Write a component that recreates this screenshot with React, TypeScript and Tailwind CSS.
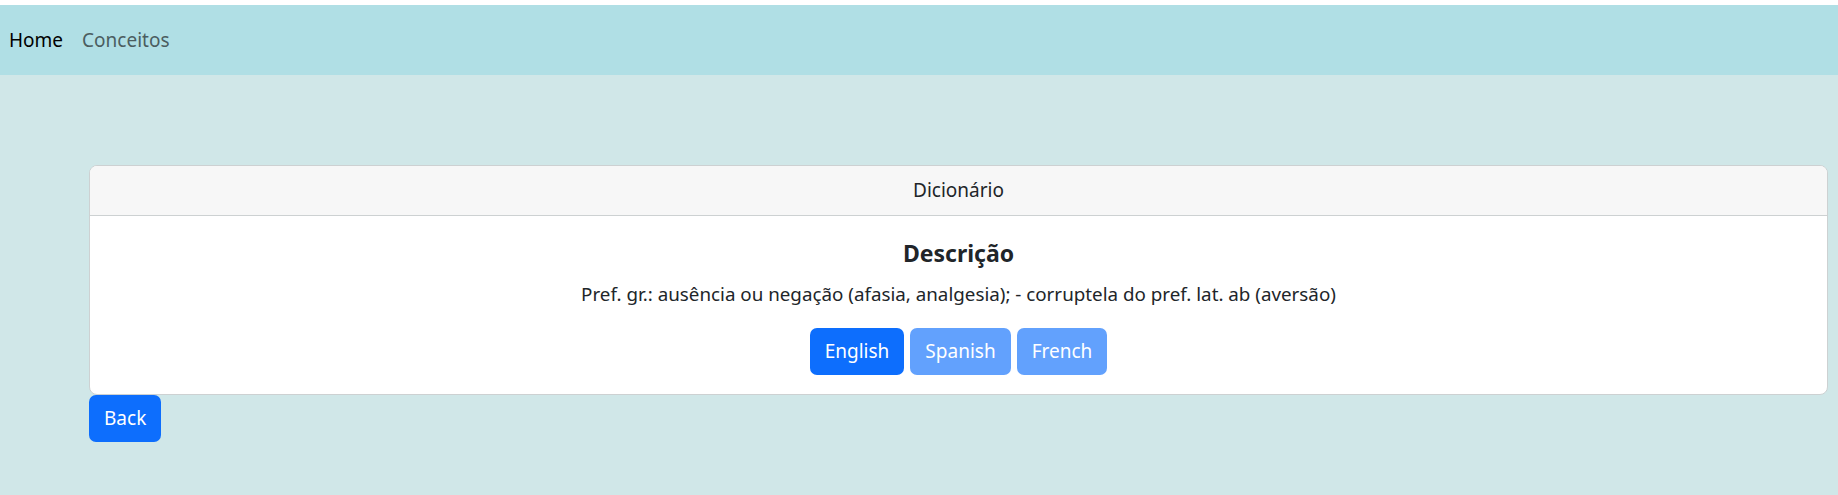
export default function App() {
  return (
    <div className="min-h-[495px] bg-[#d0e7e8] pt-[5px] font-['Noto_Sans',sans-serif] text-[19px] text-[#212529]" style={{ backgroundImage: "linear-gradient(#fff 5px, transparent 5px)" }}>
      <nav className="flex h-[70px] items-center gap-[19px] bg-[#b0dfe5] px-[9px]">
        <a className="text-black">Home</a>
        <a className="text-[#4b5d60]">Conceitos</a>
      </nav>

      <main className="pl-[89px] pr-[10px] pt-[90px]">
        <div className="overflow-hidden rounded-[8px] border border-[#cdd1d2] bg-white">
          <div className="flex h-[50px] items-center justify-center border-b border-[#cdd1d2] bg-[#f7f7f7]">
            Dicionário
          </div>
          <div className="flex flex-col items-center pt-[21px] pb-[19px]">
            <h5 className="text-[23px] font-bold leading-[32px]">Descrição</h5>
            <p className="mt-[10px] text-[18.8px] leading-[30px]">
              Pref. gr.: ausência ou negação (afasia, analgesia); - corruptela do pref. lat. ab (aversão)
            </p>
            <div className="mt-[19px] flex gap-[6px]">
              <button className="h-[47px] rounded-[7px] bg-[#0d6efd] px-[15px] text-white">English</button>
              <button className="h-[47px] rounded-[7px] bg-[#62a1fd] px-[15px] text-white">Spanish</button>
              <button className="h-[47px] rounded-[7px] bg-[#62a1fd] px-[15px] text-white">French</button>
            </div>
          </div>
        </div>
        <button className="h-[47px] rounded-[7px] bg-[#0d6efd] px-[15px] text-white">Back</button>
      </main>
    </div>
  );
}
